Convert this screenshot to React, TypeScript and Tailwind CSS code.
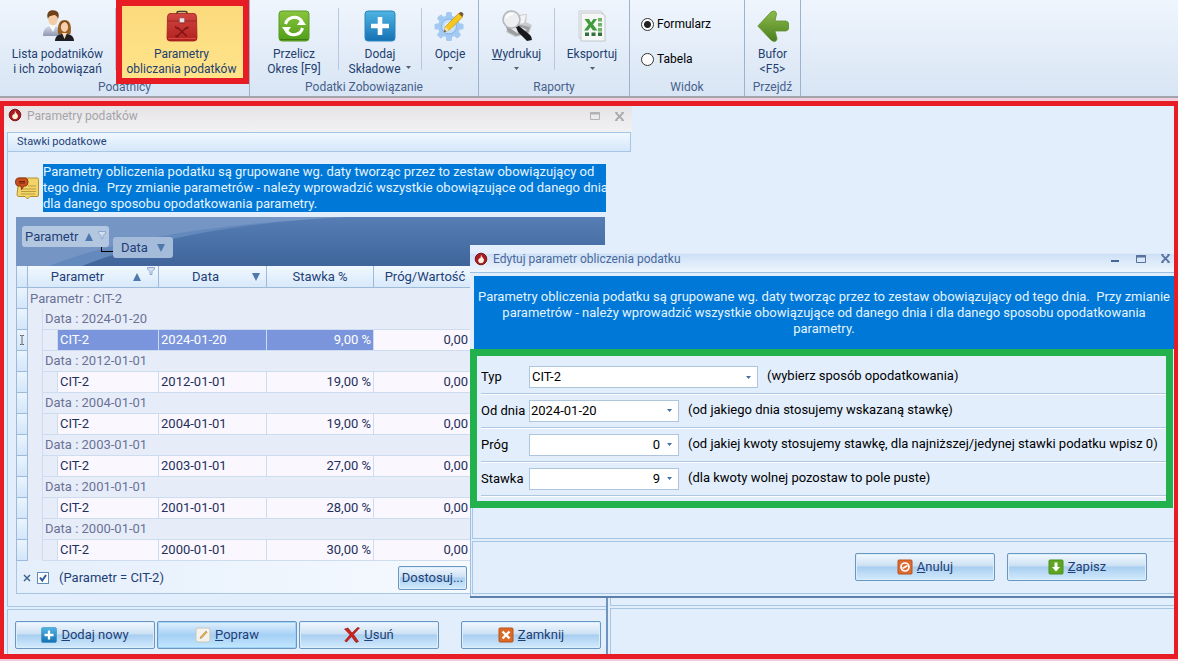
import React, { useState } from "react"

type IconProps = {
    className?: string
}

type RateRow = {
    typ: string
    data: string
    stawka: string
    prog: string
}

const rates: RateRow[] = [
    { typ: "CIT-2", data: "2024-01-20", stawka: "9,00 %", prog: "0,00" },
    { typ: "CIT-2", data: "2012-01-01", stawka: "19,00 %", prog: "0,00" },
    { typ: "CIT-2", data: "2004-01-01", stawka: "19,00 %", prog: "0,00" },
    { typ: "CIT-2", data: "2003-01-01", stawka: "27,00 %", prog: "0,00" },
    { typ: "CIT-2", data: "2001-01-01", stawka: "28,00 %", prog: "0,00" },
    { typ: "CIT-2", data: "2000-01-01", stawka: "30,00 %", prog: "0,00" },
]

// Ikony wstążki
function PeopleIcon() {
    return (
        <svg viewBox="0 0 32 32" className="h-8 w-8">
            <defs>
                <linearGradient id="suit" x1="0" y1="0" x2="0" y2="1">
                    <stop offset="0" stopColor="#d7dbe8" />
                    <stop offset="1" stopColor="#8f97b3" />
                </linearGradient>
            </defs>
            <path d="M1 26c0-7 3-9 7-10h5c4 1 5 4 5 10z" fill="url(#suit)" />
            <path d="M7 15l4 7 3-7z" fill="#fff" />
            <ellipse cx="11" cy="9" rx="4.800" ry="6.500" fill="#f3cda6" />
            <path d="M6 9C3.500 3 8-1 12 .5c5 0 5.500 5 4 8.500-1-3-2-4-4-4-2 1-5 0-6 4z" fill="#6d4218" />
            <path d="M16 24c-1-8 1-14 6.500-14S30 16 28.500 24z" fill="#9a5f22" />
            <ellipse cx="22.500" cy="17" rx="3.600" ry="5" fill="#f5cfae" />
            <path d="M18.500 17c0-4 3-5 5-5 2 1 3 2 3 5 1-4 0-6-4-6s-5 3-4 6z" fill="#7c4615" />
            <path d="M13 31c0-4 3-7 7-7h5c4 0 7 3 7 7z" fill="#1d1d22" />
            <path d="M20 23l2.500 6 2.500-6z" fill="#f7dcc4" />
        </svg>
    )
}

function ToolboxIcon() {
    return (
        <svg viewBox="0 0 32 32" className="h-8 w-8">
            <defs>
                <linearGradient id="box" x1="0" y1="0" x2="0" y2="1">
                    <stop offset="0" stopColor="#d04740" />
                    <stop offset="1" stopColor="#b3211f" />
                </linearGradient>
            </defs>
            <path d="M11 4V3q0-1.500 1.500-1.500h7Q21 1.500 21 3v1" fill="none" stroke="#4b3a35" strokeWidth="1.600" />
            <path d="M4 3.500h24q2 0 2.500 3L31 28q0 3-3 3H4q-3 0-3-3L1.500 6.500q.5-3 2.500-3z" fill="url(#box)" stroke="#9d2020" strokeWidth=".8" />
            <path d="M1.500 11h12v2h5v-2h12" fill="none" stroke="#932020" strokeWidth=".8" />
            <rect x="13.500" y="8" width="5" height="4.500" rx=".8" fill="#e9e4e6" stroke="#8b6a70" strokeWidth=".6" />
            <path d="M11.500 17.500l9 8.500M20.500 17.500l-9 8.500" stroke="#7f1416" strokeWidth="1.500" strokeLinecap="round" />
            <path d="M9.500 16q0 3 3 2.500M22.500 16.500q-.5 2.500-3 2M9.500 25q1 2.500 3 1.500" fill="none" stroke="#7f1416" strokeWidth="1.200" />
            <path d="M2 28.500h28" stroke="#e25b50" strokeWidth=".7" />
        </svg>
    )
}

function RefreshIcon() {
    return (
        <svg viewBox="0 0 32 32" className="h-8 w-8">
            <defs>
                <linearGradient id="green" x1="0" y1="0" x2="0" y2="1">
                    <stop offset="0" stopColor="#8ac43e" />
                    <stop offset="1" stopColor="#4f9e18" />
                </linearGradient>
            </defs>
            <rect x="1" y="1" width="30" height="30" rx="3" fill="url(#green)" stroke="#5b9a26" />
            <path d="M7.500 14A9 9 0 0 1 23.500 11M24.500 18A9 9 0 0 1 8.500 21" fill="none" stroke="#fff" strokeWidth="3" />
            <path d="M19 15h9l-4.500-6.500zM13 17H4l4.500 6.500z" fill="#fff" />
            <path d="M2 29.500h28" stroke="#3d7d10" />
        </svg>
    )
}

function PlusIcon({ className }: IconProps) {
    return (
        <svg viewBox="0 0 32 32" className={className}>
            <defs>
                <linearGradient id="blue" x1="0" y1="0" x2="0" y2="1">
                    <stop offset="0" stopColor="#4fb4e2" />
                    <stop offset="1" stopColor="#1671b4" />
                </linearGradient>
            </defs>
            <rect x="1" y="1" width="30" height="30" rx="3" fill="url(#blue)" stroke="#2a86bf" />
            <path d="M16 7v18M7 16h18" stroke="#fff" strokeWidth="4.600" />
        </svg>
    )
}

function GearIcon() {
    return (
        <svg viewBox="0 0 32 32" className="h-8 w-8">
            <g fill="#a3caf3">
                <rect x="12" y="2" width="6" height="29" rx="1.500" />
                <rect x="12" y="2" width="6" height="29" rx="1.500" transform="rotate(45 15 16.500)" />
                <rect x="12" y="2" width="6" height="29" rx="1.500" transform="rotate(90 15 16.500)" />
                <rect x="12" y="2" width="6" height="29" rx="1.500" transform="rotate(135 15 16.500)" />
                <circle cx="15" cy="16.500" r="11" />
            </g>
            <circle cx="15" cy="16.500" r="7.500" fill="#c6dff8" stroke="#82b1e6" />
            <circle cx="15" cy="16.500" r="4" fill="#e9f3fd" />
            <path d="M10 22l1.500-5.500L24.500 3.500l4 3.500-13 13z" fill="#f6c81f" stroke="#c99313" strokeWidth=".7" />
            <path d="M24.500 3.500l2-1.500q2-.5 3 2l-1 3z" fill="#7d5a32" />
            <path d="M10 22l1.500-5 3.500 3.500z" fill="#f3dfb4" />
            <path d="M10 22l.7-2.300 1.500 1.500z" fill="#333" />
        </svg>
    )
}

function PreviewIcon() {
    return (
        <svg viewBox="0 0 32 32" className="h-8 w-8">
            <path d="M17 5l9-1-1 8 6 3-3 9-14 3-9-5 3-8z" fill="#c9cacc" />
            <path d="M18 6l7-1-2 8-6 1z" fill="#f4f4f5" />
            <path d="M5 17l10-3 14 3-2 6-12 3-8-4z" fill="#9c9ea2" />
            <path d="M9 18l11-1 6 3-10 3z" fill="#e6e7e9" />
            <path d="M15 17l3-1 11 9q2 2 2 5l-5 1-9-9z" fill="#17181b" />
            <circle cx="10.500" cy="9.500" r="8.500" fill="#eceef0" stroke="#b4b7bb" strokeWidth="1.600" />
            <path d="M5 8q2-4.500 7-4" fill="none" stroke="#fff" strokeWidth="2" />
        </svg>
    )
}

function ExcelIcon() {
    return (
        <svg viewBox="0 0 32 32" className="h-8 w-8">
            <path d="M3 1h22l2 2v25H3z" fill="#f1f3f4" stroke="#c0c6cb" strokeWidth=".8" />
            <path d="M5 3h20l4 2.500V31H5z" fill="#f5f6f6" stroke="#b8bdc2" strokeWidth=".8" />
            <path d="M8.500 9h4.500l2 3.500L17.500 9h3.500l-4 5.500 4.500 6h-4.500L14.500 17 12 20.500H8l4.500-6z" fill="#3f9b3b" />
            <path d="M22 8h4v3.500h-4zM22 13h4v3.500h-4zM22 18h4v3.500h-4z" fill="#6fb565" />
            <path d="M9 22.500h4V26H9zM15.500 22.500h4V26h-4zM22 22.500h4V26h-4z" fill="#34703a" />
        </svg>
    )
}

function BackIcon() {
    return (
        <svg viewBox="0 0 32 32" className="h-8 w-8">
            <defs>
                <linearGradient id="back" x1="0" y1="0" x2="0" y2="1">
                    <stop offset="0" stopColor="#8dbb4c" />
                    <stop offset="1" stopColor="#4a7f1e" />
                </linearGradient>
            </defs>
            <path d="M.8 16L14 2q5-2.500 5.500 2L18 11h11q3 .5 3 5t-3 5H18l2 7.500q-.5 4.500-5.500 2z" fill="url(#back)" stroke="#5d8f2c" strokeWidth=".8" />
        </svg>
    )
}

// Ikony okien i przycisków
function FlameIcon({ className }: IconProps) {
    return (
        <svg viewBox="0 0 14 14" className={className}>
            <circle cx="7" cy="7" r="5.800" fill="#a81c22" stroke="#7c1418" />
            <path d="M7 2.500q.5 2 2 3.500t.8 3.200Q9 11.200 7 11.200T4.200 9.200Q4 7.500 5.500 6L6 6.800Q7 5 7 2.500z" fill="#fff3dc" />
        </svg>
    )
}

function NoteIcon() {
    return (
        <svg viewBox="0 0 24 24" className="h-6 w-6 shrink-0">
            <path d="M4 2h18q1.500 0 1.500 1.500v15.500q0 1.500-1.500 1.500H15l-2.500 2.500-2.500-2.500H4q-2 0-2-2z" fill="#f2d568" stroke="#b38f2c" />
            <path d="M6 13h15M6 15.500h15M13 10h8M6 18h14" stroke="#bb9a3c" />
            <path d="M3 2h7.500Q13 2.500 13 6t-2.500 4H9l-2.500 3.500L6 10H3Q.5 9.500.5 6T3 2z" fill="#c8501f" stroke="#8b3413" />
            <path d="M4 5.500h6M4 7h6" stroke="#73230b" />
        </svg>
    )
}

function PencilIcon() {
    return (
        <svg viewBox="0 0 16 16" className="h-4 w-4">
            <rect x="1" y="1" width="14" height="14" rx="2" fill="#f4f2ec" stroke="#c9c5ba" />
            <path d="M5 11.500l.8-2 5.200-5.500 1.200 1.200-5.200 5.600z" fill="#efb345" stroke="#8f7a55" strokeWidth=".5" />
        </svg>
    )
}

function DeleteIcon() {
    return (
        <svg viewBox="0 0 16 16" className="h-4 w-4">
            <path d="M.5 2L4 1l4 5 5.500-5.500 2 .5L9.500 7.500l5 7-2.500 1L7.500 9.500 2.500 15 .8 14 6 7.800z" fill="#d0211c" stroke="#8b1511" strokeWidth=".6" />
        </svg>
    )
}

function CloseIcon() {
    return (
        <svg viewBox="0 0 16 16" className="h-4 w-4">
            <rect x="1" y="1" width="14" height="14" rx="1" fill="#dc6a26" stroke="#b9531c" />
            <path d="M4.500 4.500l7 7M11.500 4.500l-7 7" stroke="#fff" strokeWidth="2.400" />
        </svg>
    )
}

function CancelIcon() {
    return (
        <svg viewBox="0 0 16 16" className="h-4 w-4">
            <rect x="1" y="1" width="14" height="14" rx="1" fill="#dc6a32" stroke="#b9531c" />
            <circle cx="8" cy="8" r="4" fill="none" stroke="#fff" strokeWidth="1.700" />
            <path d="M5.500 9.500l5-3" stroke="#fff" strokeWidth="1.700" />
        </svg>
    )
}

function SaveIcon() {
    return (
        <svg viewBox="0 0 16 16" className="h-4 w-4">
            <rect x="1" y="1" width="14" height="14" rx="1" fill="#5fa522" stroke="#4d8f1a" />
            <path d="M6.500 3.500h3V8H12l-4 4.500L4 8h2.500z" fill="#fff" />
        </svg>
    )
}

function Caret({ className }: IconProps) {
    return (
        <svg viewBox="0 0 5 3" className={className}>
            <path d="M0 0h5L2.500 3z" fill="currentColor" />
        </svg>
    )
}

function SortArrow({ up }: { up?: boolean }) {
    return (
        <svg viewBox="0 0 8 8" className="h-2 w-2 shrink-0">
            <path d={up ? "M4 0l4 8H0z" : "M0 0h8L4 8z"} fill="#4f79ad" />
        </svg>
    )
}

function FilterIcon() {
    return (
        <svg viewBox="0 0 8 8" className="h-2 w-2 shrink-0 self-start">
            <path d="M.5.5h7v1.500L5 4.500v3H3v-3L.5 2z" fill="#d5e1f0" stroke="#8ea9cc" />
        </svg>
    )
}

function WindowIcon({ className }: IconProps) {
    return (
        <svg viewBox="0 0 10 8" className={className}>
            <path d="M.5.5h9v7h-9z" fill="none" stroke="currentColor" />
            <path d="M0 1.500h10" stroke="currentColor" strokeWidth="2" />
        </svg>
    )
}

function CrossIcon({ className }: IconProps) {
    return (
        <svg viewBox="0 0 10 10" className={className}>
            <path d="M1 1l8 8M9 1L1 9" stroke="currentColor" strokeWidth="2" />
            <path d="M0 .5h3M7 .5h3M0 9.500h3M7 9.500h3" stroke="currentColor" />
        </svg>
    )
}

type RibbonButtonProps = {
    icon: React.ReactNode
    className: string
    children: React.ReactNode
    caret?: boolean
}

function RibbonButton({ icon, className, children, caret }: RibbonButtonProps) {
    return (
        <button className={`flex flex-col items-center pt-[10px] text-center leading-[15px] text-[#23406f] ${className}`}>
            {icon}
            <span className="mt-[5px] whitespace-nowrap">{children}</span>
            {caret && <Caret className="mt-[5px] h-[3px] w-[5px] text-[#55606e]" />}
        </button>
    )
}

function RibbonSeparator() {
    return <div className="mt-2 h-[62px] w-px bg-[#b7c9de]" />
}

type RibbonGroupProps = {
    title: string
    className: string
    children: React.ReactNode
}

function RibbonGroup({ title, className, children }: RibbonGroupProps) {
    return (
        <div className={`relative flex shrink-0 flex-col border-r border-[#9db2cb] ${className}`}>
            <div className="flex h-[79px]">{children}</div>
            <div className="text-center leading-4 text-[#47618c]">{title}</div>
        </div>
    )
}

type ActionButtonProps = {
    icon: React.ReactNode
    label: string
    active?: boolean
}

function ActionButton({ icon, label, active }: ActionButtonProps) {
    return (
        <button
            className={`flex h-7 w-[140px] items-center justify-center gap-1 rounded-[2px] border border-[#6a97bf] text-[#1e3f77] ${
                active
                    ? "bg-linear-to-b from-[#dceefb] from-5% via-[#a4d0f5] via-50% to-[#c3e8ff] shadow-[inset_0_0_0_1px_#9ed2fa]"
                    : "bg-[linear-gradient(#f1f8fe,#cde1f4_45%,#a9cef0_50%,#d2ebfd)] shadow-[inset_0_0_0_1px_#dcedfb]"
            }`}
        >
            {icon}
            <span>
                <span className="underline">{label[0]}</span>
                {label.slice(1)}
            </span>
        </button>
    )
}

function Ribbon() {
    const [view, setView] = useState("formularz")

    return (
        <header className="flex h-[98px] shrink-0 border-b-2 border-[#a3a3ad] bg-linear-to-b from-[#eff5fd] to-[#d8e5f4] text-[12px]">
            <RibbonGroup title="Podatnicy" className="w-[250px]">
                <RibbonButton icon={<PeopleIcon />} className="w-[115px]">
                    Lista podatników
                    <br />i ich zobowiązań
                </RibbonButton>
                <RibbonSeparator />
                <RibbonButton icon={<ToolboxIcon />} className="w-[133px] bg-linear-to-b from-[#fbd97c] to-[#ffe48a] pr-[2px]">
                    Parametry
                    <br />
                    obliczania podatków
                </RibbonButton>
                <div className="pointer-events-none absolute top-0 right-0 h-[84px] w-[133px] border-[6px] border-[#e81c24]" />
            </RibbonGroup>
            <RibbonGroup title="Podatki Zobowiązanie" className="w-[229px]">
                <RibbonButton icon={<RefreshIcon />} className="w-[88px]">
                    Przelicz
                    <br />
                    Okres [F9]
                </RibbonButton>
                <RibbonSeparator />
                <RibbonButton icon={<PlusIcon className="h-8 w-8" />} className="w-[82px]">
                    Dodaj
                    <br />
                    Składowe&nbsp; <Caret className="mb-1 inline h-[3px] w-[5px] text-[#55606e]" />
                </RibbonButton>
                <RibbonSeparator />
                <RibbonButton icon={<GearIcon />} className="w-[56px]" caret>
                    Opcje
                </RibbonButton>
            </RibbonGroup>
            <RibbonGroup title="Raporty" className="w-[151px]">
                <RibbonButton icon={<PreviewIcon />} className="w-[75px]" caret>
                    <span className="underline">W</span>ydrukuj
                </RibbonButton>
                <RibbonSeparator />
                <RibbonButton icon={<ExcelIcon />} className="w-[74px]" caret>
                    Eksportuj
                </RibbonButton>
            </RibbonGroup>
            <RibbonGroup title="Widok" className="w-[115px]">
                <div className="flex flex-col gap-[19px] pt-4 pl-[11px] leading-4 text-black">
                    {["Formularz", "Tabela"].map((name) => (
                        <label key={name} className="flex items-center gap-[3px]">
                            <input
                                type="radio"
                                name="widok"
                                className="h-[13px] w-[13px] appearance-none rounded-full border border-[#333] bg-white checked:bg-[radial-gradient(#222_3px,#fff_4px)]"
                                checked={view === name.toLowerCase()}
                                onChange={() => setView(name.toLowerCase())}
                            />
                            {name}
                        </label>
                    ))}
                </div>
            </RibbonGroup>
            <RibbonGroup title="Przejdź" className="w-[56px]">
                <RibbonButton icon={<BackIcon />} className="w-[55px]">
                    Bufor
                    <br />
                    &lt;F5&gt;
                </RibbonButton>
            </RibbonGroup>
        </header>
    )
}

function RatesTable() {
    const head = "border-r border-b border-[#9dbbd9] bg-linear-to-b from-[#f1f8ff] to-[#d8e9fa] p-0 font-normal"
    const mark = "border-r border-b border-l border-[#9dbbd9] bg-linear-to-b from-[#eaf4fe] to-[#d3e6f9] p-0"

    return (
        <table className="w-[455px] table-fixed border-separate border-spacing-0 leading-5 text-[#1f2f5c]">
            <colgroup>
                <col className="w-[12px]" />
                <col className="w-[15px]" />
                <col className="w-[15px]" />
                <col className="w-[101px]" />
                <col className="w-[108px]" />
                <col className="w-[107px]" />
                <col className="w-[97px]" />
            </colgroup>
            <thead>
                <tr className="h-[22px] text-[#1e3f77]">
                    <th className={mark}></th>
                    <th className={head} colSpan={3}>
                        <div className="flex items-center gap-[6px] pr-[3px]">
                            <span className="flex-1">Parametr</span>
                            <SortArrow up />
                            <FilterIcon />
                        </div>
                    </th>
                    <th className={head}>
                        <div className="flex items-center pr-[6px]">
                            <span className="flex-1">Data</span>
                            <SortArrow />
                        </div>
                    </th>
                    <th className={head}>Stawka %</th>
                    <th className={`${head} pl-[6px]`}>Próg/Wartość</th>
                </tr>
            </thead>
            <tbody>
                <tr className="h-[21px] bg-[#e6edf9] text-[#6b7196]">
                    <td className={mark}></td>
                    <td className="p-0 pl-[2px]" colSpan={6}>Parametr : CIT-2</td>
                </tr>
                {rates.map((rate, index) => {
                    const selected = index === 0
                    const cell = `border-r border-b border-[#cddcef] px-[2px] py-0 ${selected ? "bg-[#7b95dc] text-white" : "bg-[#faf7fe]"}`
                    return (
                        <React.Fragment key={rate.data}>
                            <tr className="h-[21px] bg-[#e6edf9] text-[#6b7196]">
                                <td className={mark}></td>
                                <td className="border-r border-[#cddcef] p-0"></td>
                                <td className="border-b border-[#cddcef] p-0 pl-[2px]" colSpan={5}>Data : {rate.data}</td>
                            </tr>
                            <tr className="h-[21px] bg-[#e6edf9]">
                                <td className={mark}>
                                    {selected && (
                                        <svg viewBox="0 0 10 10" className="h-[10px] w-[10px]">
                                            <path d="M3 .5h1.500L5 1l.5-.5H7M5 1v8M3 9.500h1.500L5 9l.5.5H7" fill="none" stroke="#555" strokeWidth=".9" />
                                        </svg>
                                    )}
                                </td>
                                <td className="border-r border-[#cddcef] p-0"></td>
                                <td className="border-r border-b border-[#cddcef] p-0"></td>
                                <td className={cell}>{rate.typ}</td>
                                <td className={cell}>{rate.data}</td>
                                <td className={`${cell} text-right`}>{rate.stawka}</td>
                                <td className="border-b border-[#cddcef] bg-[#faf7fe] py-0 pr-[3px] text-right">{rate.prog}</td>
                            </tr>
                        </React.Fragment>
                    )
                })}
            </tbody>
        </table>
    )
}

function RatesWindow() {
    const [filterOn, setFilterOn] = useState(true)

    return (
        <section className="flex w-[628px] flex-col">
            <div className="flex h-[26px] items-start bg-linear-to-b from-[#e6e3e5] to-[#f1f2f4] pt-[2px] pr-2 pl-1 text-[12px] leading-4 text-[#a5a5a9]">
                <FlameIcon className="mr-[5px] h-[14px] w-[14px]" />
                <span className="flex-1">Parametry podatków</span>
                <button aria-label="Maksymalizuj" className="mt-1 mr-[15px]">
                    <WindowIcon className="h-2 w-[10px] text-[#b2b2b6]" />
                </button>
                <button aria-label="Zamknij okno" className="mt-1">
                    <CrossIcon className="h-[9px] w-[9px] text-[#a8a8ac]" />
                </button>
            </div>
            <div className="mr-px ml-[3px] h-[20px] border border-[#a6c6e4] bg-linear-to-b from-[#f0f8ff] to-[#d5e7fa] pl-[9px] text-[11px] leading-[18px] text-[#1e3f77]">
                Stawki podatkowe
            </div>
            <div className="flex w-[602px] flex-1 flex-col">
                <div className="ml-[3px] border-b border-l border-[#a6c6e4] pb-3">
                    <div className="mt-3 flex items-center pl-[7px]">
                        <NoteIcon />
                        <p className="ml-1 w-[563px] overflow-hidden bg-[#0078d7] leading-4 whitespace-pre text-[#e4f4ff]">
                            {"Parametry obliczenia podatku są grupowane wg. daty tworząc przez to zestaw obowiązujący od\ntego dnia.  Przy zmianie parametrów - należy wprowadzić wszystkie obowiązujące od danego dnia i\ndla danego sposobu opodatkowania parametry."}
                        </p>
                    </div>
                    <div className="mt-[5px] ml-2 flex flex-col">
                        <div className="relative flex h-[49px] w-[589px] items-start gap-1 overflow-hidden bg-[#46699f] pl-[6px] text-[#1e3f77]">
                            <svg viewBox="0 0 589 49" preserveAspectRatio="none" className="absolute inset-0 h-full w-full">
                                <defs>
                                    <linearGradient id="deep" x1="0" y1="0" x2="0" y2="1">
                                        <stop offset="0" stopColor="#567eb5" />
                                        <stop offset="1" stopColor="#3f659b" />
                                    </linearGradient>
                                </defs>
                                <rect width="589" height="49" fill="url(#deep)" />
                                <path d="M0 0h330Q170 8 66 49H0z" fill="#6489bd" />
                                <path d="M0 0h330Q130 10 33 49H0z" fill="#7596c4" />
                            </svg>
                            <button className="relative mt-[9px] flex h-[21px] w-[87px] items-center gap-[5px] rounded-[3px] bg-[#b4c7e0] px-[3px]">
                                <span className="flex-1 text-left">Parametr</span>
                                <SortArrow up />
                                <span className="flex h-3 pb-1"><FilterIcon /></span>
                            </button>
                            <div className="absolute top-[30px] left-[85px] h-[5px] w-3 border-b border-l border-black" />
                            <button className="relative mt-5 flex h-[21px] w-[60px] items-center justify-between rounded-[3px] bg-[#a5bbda] px-2">
                                Data
                                <SortArrow />
                            </button>
                        </div>
                        <RatesTable />
                        <div className="flex h-[33px] w-[455px] items-center border-b border-l border-[#a6c6e4] bg-linear-to-r from-[#e4effb] to-[#f6faff] pt-px pr-1 pl-[6px] text-[#1e3f77]">
                            <button aria-label="Usuń filtr">
                                <svg viewBox="0 0 8 8" className="h-2 w-2">
                                    <path d="M1 1l6 6M7 1L1 7" stroke="#3d6792" strokeWidth="1.500" />
                                </svg>
                            </button>
                            <label className="ml-[6px] flex flex-1 items-center gap-[10px]">
                                <span className="relative flex">
                                    <input
                                        type="checkbox"
                                        className="h-3 w-3 appearance-none border border-[#5f8fb5] bg-white"
                                        checked={filterOn}
                                        onChange={(e) => setFilterOn(e.target.checked)}
                                    />
                                    {filterOn && (
                                        <svg viewBox="0 0 12 12" className="pointer-events-none absolute inset-0 h-3 w-3">
                                            <path d="M3 5.500L5.200 8.500 9 3" fill="none" stroke="#2c5c98" strokeWidth="2" />
                                        </svg>
                                    )}
                                </span>
                                (Parametr = CIT-2)
                            </label>
                            <button className="h-6 w-[69px] rounded-[2px] border border-[#6a97bf] bg-[linear-gradient(#f1f8fe,#cde1f4_45%,#a9cef0_50%,#d2ebfd)] leading-[22px] shadow-[inset_0_0_0_1px_#dcedfb]">
                                Dostosuj...
                            </button>
                        </div>
                    </div>
                </div>
                <div className="mt-[2px] ml-[3px] flex flex-1 gap-[2px] border-t border-l border-[#a6c6e4] pt-[11px] pr-[5px] pl-[7px]">
                    <ActionButton icon={<PlusIcon className="h-4 w-4" />} label="Dodaj nowy" />
                    <ActionButton icon={<PencilIcon />} label="Popraw" active />
                    <ActionButton icon={<DeleteIcon />} label="Usuń" />
                    <div className="ml-auto">
                        <ActionButton icon={<CloseIcon />} label="Zamknij" />
                    </div>
                </div>
            </div>
        </section>
    )
}

type FieldRowProps = {
    id: string
    label: string
    hint: string
    children: React.ReactNode
}

function FieldRow({ id, label, hint, children }: FieldRowProps) {
    return (
        <div className="flex h-[34px] items-center border-b border-[#aec8e2] shadow-[0_1px_0_#fff]">
            <label htmlFor={id} className="w-12 shrink-0 whitespace-nowrap">{label}</label>
            {children}
            <span className="ml-[9px] pb-[2px] whitespace-nowrap">{hint}</span>
        </div>
    )
}

type ValueFieldProps = {
    id: string
    value: string
    onChange: (value: string) => void
    right?: boolean
}

function ValueField({ id, value, onChange, right }: ValueFieldProps) {
    return (
        <div className="flex h-[22px] w-[150px] shrink-0 items-center border border-[#adc6de] bg-white">
            <input
                id={id}
                className={`min-w-0 flex-1 bg-transparent px-px outline-none ${right ? "text-right" : ""}`}
                value={value}
                onChange={(e) => onChange(e.target.value)}
            />
            <button aria-label="Rozwiń" className="px-[6px]">
                <Caret className="h-[3px] w-[5px] text-[#3f70a8]" />
            </button>
        </div>
    )
}

function EditWindow() {
    const [form, setForm] = useState({ typ: "CIT-2", odDnia: "2024-01-20", prog: "0", stawka: "9" })

    return (
        <section className="absolute top-[139px] right-0 left-[466px] flex flex-col border-b-2 border-[#5c80aa] bg-[#e2eefc] text-black">
            <div className="flex h-[27px] items-center bg-linear-to-b from-[#e2eefc] from-30% via-[#cfe1f7] via-35% to-[#eef5fd] pr-1 pl-1 text-[12px] text-[#48699c]">
                <FlameIcon className="mr-[5px] h-[14px] w-[14px]" />
                <span className="flex-1">Edytuj parametr obliczenia podatku</span>
                <button aria-label="Minimalizuj" className="mt-1 mr-[17px] h-[2px] w-2 bg-[#476694]" />
                <button aria-label="Maksymalizuj" className="mr-[15px]">
                    <WindowIcon className="h-2 w-[10px] text-[#56729b]" />
                </button>
                <button aria-label="Zamknij okno">
                    <CrossIcon className="h-[9px] w-[9px] text-[#56729b]" />
                </button>
            </div>
            <div className="border-t border-[#9fbfe0] pt-[3px] pl-1">
                <p className="h-[73px] bg-[#0078d7] pt-[13px] text-center leading-4 whitespace-pre text-[#e4f4ff]">
                    {"Parametry obliczenia podatku są grupowane wg. daty tworząc przez to zestaw obowiązujący od tego dnia.  Przy zmianie\nparametrów - należy wprowadzić wszystkie obowiązujące od danego dnia i dla danego sposobu opodatkowania\nparametry."}
                </p>
            </div>
            <form className="mr-px border-[7px] border-[#22b14c] pt-1 pb-[5px] pl-1" onSubmit={(e) => e.preventDefault()}>
                <FieldRow id="typ" label="Typ" hint="(wybierz sposób opodatkowania)">
                    <div className="relative h-[22px] w-[229px] shrink-0 border border-[#adc6de] bg-white">
                        <select
                            id="typ"
                            className="block h-full w-full appearance-none bg-transparent px-[2px] outline-none"
                            value={form.typ}
                            onChange={(e) => setForm({ ...form, typ: e.target.value })}
                        >
                            <option value="CIT-2">CIT-2</option>
                        </select>
                        <Caret className="pointer-events-none absolute top-[9px] right-[6px] h-[3px] w-[5px] text-[#3f70a8]" />
                    </div>
                </FieldRow>
                <FieldRow id="odDnia" label="Od dnia" hint="(od jakiego dnia stosujemy wskazaną stawkę)">
                    <ValueField id="odDnia" value={form.odDnia} onChange={(odDnia) => setForm({ ...form, odDnia })} />
                </FieldRow>
                <FieldRow id="prog" label="Próg" hint="(od jakiej kwoty stosujemy stawkę, dla najniższej/jedynej stawki podatku wpisz 0)">
                    <ValueField id="prog" value={form.prog} onChange={(prog) => setForm({ ...form, prog })} right />
                </FieldRow>
                <FieldRow id="stawka" label="Stawka" hint="(dla kwoty wolnej pozostaw to pole puste)">
                    <ValueField id="stawka" value={form.stawka} onChange={(stawka) => setForm({ ...form, stawka })} right />
                </FieldRow>
            </form>
            <div className="border-l border-[#9fbfe0] pb-[2px] pl-px">
                <div className="h-[31px] border-b border-l border-[#a6c6e4]" />
                <div className="mt-[2px] flex justify-end gap-3 border border-r-0 border-[#a6c6e4] pt-[11px] pr-[27px] pb-3">
                    <ActionButton icon={<CancelIcon />} label="Anuluj" />
                    <ActionButton icon={<SaveIcon />} label="Zapisz" />
                </div>
            </div>
        </section>
    )
}

function App() {
    return (
        <div className="flex min-h-screen flex-col bg-[#f0ccdc] font-[Roboto,sans-serif] text-[13px]">
            <Ribbon />
            <main className="relative mt-[3px] mb-[2px] flex flex-1 overflow-hidden border-x-4 border-y-[5px] border-[#e81c24] bg-[#e2eefc]">
                <RatesWindow />
                {/* Dolna krawędź okna w tle */}
                <div className="absolute right-0 bottom-0 left-[602px] flex h-[56px] flex-col border-l-2 border-[#6f93bd] pl-[2px]">
                    <div className="h-2 border-b border-l border-[#a6c6e4]" />
                    <div className="mt-[2px] flex-1 border-t border-l border-[#a6c6e4]" />
                </div>
                <EditWindow />
            </main>
        </div>
    )
}

export default App
